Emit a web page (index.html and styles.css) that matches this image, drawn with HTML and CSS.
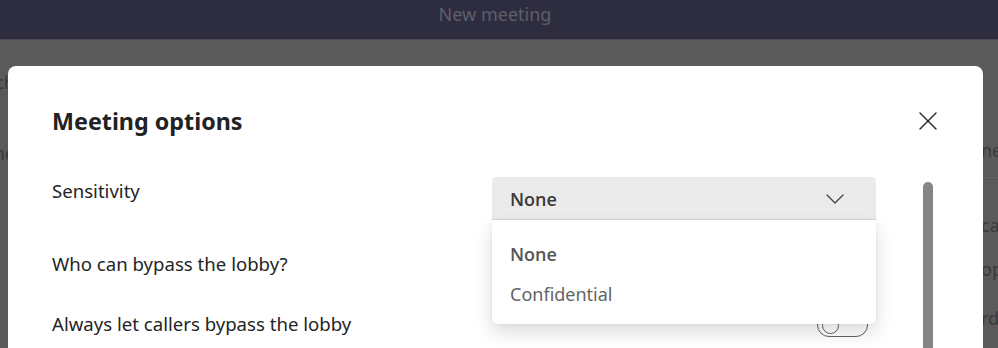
FILE: index.html
```html
<!DOCTYPE html>
<html lang="en">
<head>
<meta charset="utf-8">
<title>Meeting options</title>
<link rel="stylesheet" href="styles.css">
</head>
<body>
<div class="app">
  <header class="topbar"><span class="topbar-title">New meeting</span></header>
  <div class="page">
    <div class="side side-left">
      <p class="bg-text first">Attach</p>
      <p class="bg-text second">Time zone</p>
    </div>
    <div class="page-center"></div>
    <div class="side side-right">
      <p class="bg-text r1">ne</p>
      <div class="bg-rule"></div>
      <p class="bg-text r2">ca</p>
      <p class="bg-text r3">op</p>
      <p class="bg-text r4">rd</p>
    </div>
  </div>
</div>

<div class="dialog" role="dialog" aria-labelledby="dlg-title">
  <div class="dialog-header">
    <h1 class="dialog-title" id="dlg-title">Meeting options</h1>
    <button class="close-btn" aria-label="Close">
      <svg width="18" height="18" viewBox="0 0 18 18" aria-hidden="true">
        <path d="M1 1 L17 17 M17 1 L1 17" stroke="#242424" stroke-width="1.4" fill="none" stroke-linecap="round"/>
      </svg>
    </button>
  </div>
  <div class="dialog-body">
    <div class="form">
      <div class="row row-sensitivity">
        <label class="label">Sensitivity</label>
        <div class="dropdown">
          <div class="dropdown-button">
            <span class="dropdown-value">None</span>
            <svg class="chevron" width="18" height="10" viewBox="0 0 18 10" aria-hidden="true">
              <path d="M1 1 L9 9 L17 1" stroke="#424242" stroke-width="1.3" fill="none" stroke-linejoin="round" stroke-linecap="round"/>
            </svg>
          </div>
          <ul class="dropdown-menu">
            <li class="menu-item selected">None</li>
            <li class="menu-item">Confidential</li>
          </ul>
        </div>
      </div>
      <div class="row row-lobby">
        <label class="label">Who can bypass the lobby?</label>
        <div></div>
      </div>
      <div class="row row-callers">
        <label class="label">Always let callers bypass the lobby</label>
        <div class="toggle-cell"><span class="toggle"><span class="knob"></span></span></div>
      </div>
    </div>
    <div class="scrollbar"></div>
  </div>
</div>
</body>
</html>
```

FILE: styles.css
```css
* { box-sizing: border-box; }

html, body {
  margin: 0;
  padding: 0;
  width: 998px;
  height: 348px;
  overflow: hidden;
}

body {
  background: #5a5a5a;
  font-family: "Noto Sans", "Open Sans", sans-serif;
}

.app {
  display: flex;
  flex-direction: column;
  height: 348px;
}

.topbar {
  height: 40px;
  background: #2e2d40;
  border-bottom: 1px solid #4c4c52;
  text-align: center;
  padding: 2px 8px 0 0;
}

.topbar-title {
  font-size: 18px;
  line-height: 24px;
  color: #5f5e6b;
}

.page {
  flex: 1;
  display: flex;
}

.side {
  overflow: hidden;
}

.side-left {
  width: 15px;
  padding-top: 30px;
  text-align: right;
  white-space: nowrap;
  direction: rtl;
}

.page-center {
  width: 966px;
}

.side-right {
  flex: 1;
  padding-top: 98px;
  white-space: nowrap;
}

.bg-text {
  margin: 0;
  font-size: 18px;
  line-height: 24px;
  color: #393939;
}

.side-left .second { margin-top: 47px; }
.bg-rule {
  height: 1px;
  background: #656565;
  margin-top: 15px;
}
.side-right .r2 { margin-top: 35px; }
.side-right .r3 { margin-top: 20px; }
.side-right .r4 { margin-top: 25px; }

.dialog {
  position: fixed;
  left: 8px;
  top: 66px;
  width: 975px;
  height: 320px;
  background: #ffffff;
  border-radius: 8px;
  padding: 39px 39px 0 44px;
  color: #242424;
}

.dialog-header {
  display: flex;
  justify-content: space-between;
  align-items: center;
  height: 32px;
}

.dialog-title {
  margin: 0;
  font-size: 23.3px;
  line-height: 32px;
  font-weight: 700;
  color: #222222;
}

.close-btn {
  width: 32px;
  height: 32px;
  border: 0;
  padding: 0;
  background: transparent;
  display: flex;
  align-items: center;
  justify-content: center;
}

.dialog-body {
  display: flex;
  margin-top: 40px;
}

.form {
  flex: 0 0 824px;
  display: flex;
  flex-direction: column;
}

.row {
  display: grid;
  grid-template-columns: 440px 384px;
  align-items: start;
}

.row-sensitivity { height: 73px; }
.row-lobby { height: 60px; }
.row-callers { height: 40px; }

.label {
  font-size: 18.6px;
  line-height: 28px;
  color: #242424;
}

.dropdown {
  position: relative;
}

.dropdown-button {
  height: 43px;
  background: #ebebeb;
  border-bottom: 1px solid #dadada;
  border-radius: 4px 4px 0 0;
  display: flex;
  align-items: center;
  justify-content: space-between;
  padding: 0 32px 0 18px;
}

.dropdown-value {
  font-family: "Open Sans", "Noto Sans", sans-serif;
  font-size: 18px;
  font-weight: 600;
  color: #3a3a3a;
  line-height: 24px;
  margin-top: 1px;
}

.chevron { margin-top: 1px; }

.dropdown-menu {
  position: absolute;
  top: 43px;
  left: 0;
  width: 384px;
  height: 104px;
  margin: 0;
  padding: 14px 0 10px;
  list-style: none;
  background: #ffffff;
  border-radius: 0 0 6px 6px;
  box-shadow: 0 8px 18px rgba(0, 0, 0, 0.14), 0 0 3px rgba(0, 0, 0, 0.08);
  z-index: 2;
}

.menu-item {
  height: 40px;
  line-height: 40px;
  padding-left: 18px;
  font-size: 18px;
  color: #646464;
}

.menu-item.selected {
  font-family: "Open Sans", "Noto Sans", sans-serif;
  font-size: 18px;
  font-weight: 600;
  color: #555555;
}

.toggle-cell {
  display: flex;
  justify-content: flex-end;
  padding-right: 8px;
  padding-top: 3px;
}

.toggle {
  width: 51px;
  height: 24px;
  border: 1px solid #616161;
  border-radius: 12px;
  display: flex;
  align-items: center;
  padding-left: 4px;
}

.knob {
  width: 17px;
  height: 17px;
  border: 1px solid #616161;
  border-radius: 50%;
}

.scrollbar {
  width: 10px;
  height: 200px;
  margin-left: 47px;
  margin-top: 5px;
  background: #868686;
  border-radius: 5px;
}
```
